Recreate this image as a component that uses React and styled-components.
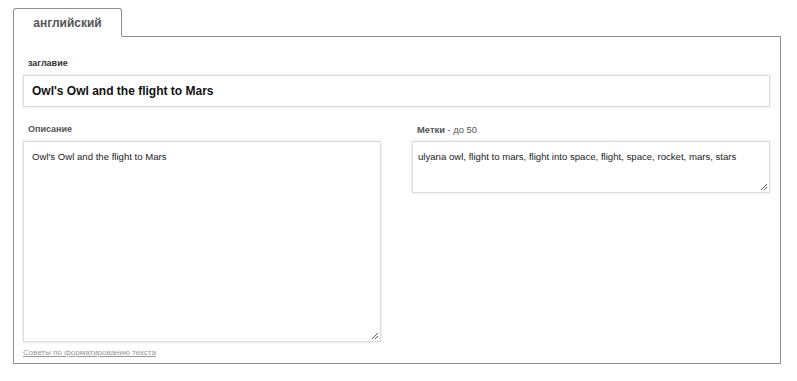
import React from "react";
import styled, { createGlobalStyle } from "styled-components";

const GlobalStyle = createGlobalStyle`
  body {
    margin: 0;
    background: #fff;
    font-family: "Liberation Sans", Arial, sans-serif;
  }
`;

const Page = styled.div`
  padding: 8px 16px 0 13px;
  width: 768px;
`;

const Tabs = styled.div`
  display: flex;
  margin-bottom: -1px;
  position: relative;
  z-index: 1;
`;

const Tab = styled.div`
  width: 109px;
  height: 29px;
  border: 1px solid #8f8f8f;
  border-bottom: 1px solid #fff;
  border-radius: 3px 3px 0 0;
  background: #fff;
  display: flex;
  align-items: center;
  justify-content: center;
  font-size: 12px;
  font-weight: bold;
  color: #555;
  box-sizing: border-box;
`;

const Panel = styled.div`
  border: 1px solid #8f8f8f;
  padding: 21px 10px 5px 9px;
  box-sizing: border-box;
  height: 328px;
`;

const Label = styled.div`
  font-size: ${(p) => p.$size || 9}px;
  font-weight: bold;
  color: ${(p) => p.$color || "#444"};
  padding-left: 5px;
  margin-bottom: 6px;
  line-height: 11px;
`;

const Hint = styled.span`
  font-weight: normal;
`;

const TitleInput = styled.div`
  height: 32px;
  border: 1px solid #dcdcdf;
  box-shadow: 0 0 3px rgba(0, 0, 0, 0.12);
  box-sizing: border-box;
  display: flex;
  align-items: center;
  padding-left: 8px;
  font-size: 12px;
  font-weight: bold;
  color: #111;
`;

const Row = styled.div`
  display: grid;
  grid-template-columns: 358px 358px;
  justify-content: space-between;
  margin-top: 17px;
`;

const Column = styled.div`
  display: flex;
  flex-direction: column;
`;

const Area = styled.div`
  height: ${(p) => p.$h}px;
  border: 1px solid #dcdcdf;
  box-shadow: 0 0 3px rgba(0, 0, 0, 0.12);
  box-sizing: border-box;
  padding: 9px ${(p) => p.$pad}px;
  font-size: 9.6px;
  color: #222;
  position: relative;
`;

const Grip = styled.svg`
  position: absolute;
  right: 1px;
  bottom: 1px;
`;

const Link = styled.a`
  display: inline-block;
  margin-top: 6px;
  font-size: 8px;
  color: #999;
  text-decoration: underline;
`;

const ResizeGrip = () => (
  <Grip width="9" height="9" viewBox="0 0 9 9">
    <path d="M8 2 L2 8 M8 5 L5 8" stroke="#555" strokeWidth="1" />
  </Grip>
);

export default function App() {
  return (
    <>
      <GlobalStyle />
      <Page>
        <Tabs>
          <Tab>английский</Tab>
        </Tabs>
        <Panel>
          <Label $color="#333">заглавие</Label>
          <TitleInput>Owl's Owl and the flight to Mars</TitleInput>
          <Row>
            <Column>
              <Label $color="#555">Описание</Label>
              <Area $h={201} $pad={8}>
                Owl's Owl and the flight to Mars
                <ResizeGrip />
              </Area>
              <Link>Советы по форматированию текста</Link>
            </Column>
            <Column>
              <Label $color="#555" $size={9.4}>
                Метки <Hint>- до 50</Hint>
              </Label>
              <Area $h={52} $pad={5}>
                ulyana owl, flight to mars, flight into space, flight, space, rocket, mars, stars
                <ResizeGrip />
              </Area>
            </Column>
          </Row>
        </Panel>
      </Page>
    </>
  );
}
